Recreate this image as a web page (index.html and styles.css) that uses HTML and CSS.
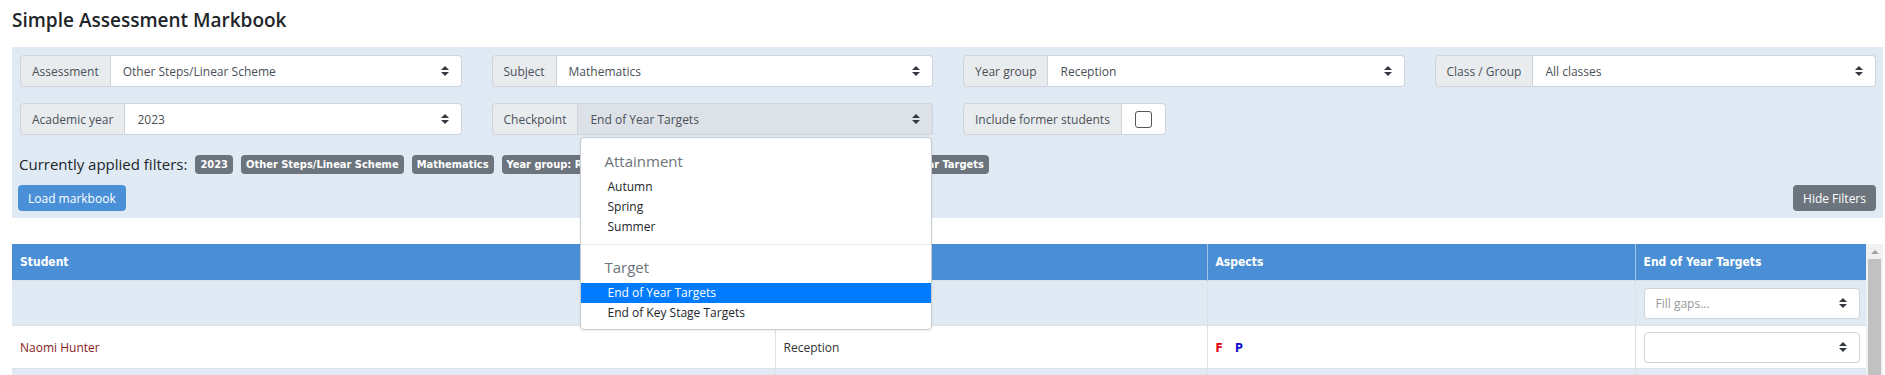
FILE: index.html
```html
<!DOCTYPE html>
<html lang="en">
<head>
    <meta charset="UTF-8">
    <title>Simple Assessment Markbook</title>
    <link rel="stylesheet" href="styles.css">
</head>
<body>
    <svg class="defs" width="0" height="0">
        <symbol id="caret" viewBox="0 0 8 10">
            <path d="M0 4 L4 0 L8 4 Z M0 6 L4 10 L8 6 Z"/>
        </symbol>
    </svg>

    <h1 class="page-title">Simple Assessment Markbook</h1>

    <section class="filters">
        <div class="filter-grid">
            <div class="input-group">
                <span class="group-label">Assessment</span>
                <div class="fake-select"><span>Other Steps/Linear Scheme</span><svg class="caret"><use href="#caret"/></svg></div>
            </div>
            <div class="input-group">
                <span class="group-label">Subject</span>
                <div class="fake-select"><span>Mathematics</span><svg class="caret"><use href="#caret"/></svg></div>
            </div>
            <div class="input-group">
                <span class="group-label">Year group</span>
                <div class="fake-select"><span>Reception</span><svg class="caret"><use href="#caret"/></svg></div>
            </div>
            <div class="input-group">
                <span class="group-label">Class / Group</span>
                <div class="fake-select"><span>All classes</span><svg class="caret"><use href="#caret"/></svg></div>
            </div>

            <div class="input-group">
                <span class="group-label">Academic year</span>
                <div class="fake-select"><span>2023</span><svg class="caret"><use href="#caret"/></svg></div>
            </div>
            <div class="input-group">
                <span class="group-label">Checkpoint</span>
                <div class="fake-select active"><span>End of Year Targets</span><svg class="caret"><use href="#caret"/></svg></div>

                <div class="select-menu">
                    <div class="menu-head">Attainment</div>
                    <div class="menu-item">Autumn</div>
                    <div class="menu-item">Spring</div>
                    <div class="menu-item">Summer</div>
                    <div class="menu-divider"></div>
                    <div class="menu-head">Target</div>
                    <div class="menu-item selected">End of Year Targets</div>
                    <div class="menu-item">End of Key Stage Targets</div>
                </div>
            </div>
            <div class="input-group compact">
                <span class="group-label">Include former students</span>
                <div class="check-cell"><span class="checkbox"></span></div>
            </div>
        </div>

        <div class="applied">
            <span>Currently applied filters:</span>
            <span class="badge">2023</span>
            <span class="badge">Other Steps/Linear Scheme</span>
            <span class="badge">Mathematics</span>
            <span class="badge">Year group: Reception</span>
            <span class="badge">Class / Group: All classes</span>
            <span class="badge">Checkpoint: End of Year Targets</span>
        </div>

        <div class="filter-actions">
            <button class="btn btn-primary">Load markbook</button>
            <button class="btn btn-secondary">Hide Filters</button>
        </div>
    </section>

    <div class="grid-wrap">
        <table class="markbook">
            <colgroup>
                <col class="col-student">
                <col class="col-year">
                <col class="col-aspects">
                <col class="col-target">
            </colgroup>
            <thead>
                <tr>
                    <th>Student</th>
                    <th>Year group</th>
                    <th>Aspects</th>
                    <th>End of Year Targets</th>
                </tr>
            </thead>
            <tbody>
                <tr class="filter-row">
                    <td></td>
                    <td></td>
                    <td></td>
                    <td><div class="cell-select placeholder"><span>Fill gaps...</span><svg class="caret"><use href="#caret"/></svg></div></td>
                </tr>
                <tr class="data-row">
                    <td class="student">Naomi Hunter</td>
                    <td>Reception</td>
                    <td><span class="aspect aspect-f">F</span><span class="aspect aspect-p">P</span></td>
                    <td><div class="cell-select"><span></span><svg class="caret"><use href="#caret"/></svg></div></td>
                </tr>
                <tr class="data-row alt">
                    <td></td>
                    <td></td>
                    <td></td>
                    <td><div class="cell-select"><span></span><svg class="caret"><use href="#caret"/></svg></div></td>
                </tr>
            </tbody>
        </table>
        <div class="scrollbar">
            <span class="scroll-arrow"></span>
            <span class="scroll-thumb"></span>
        </div>
    </div>
</body>
</html>
```

FILE: styles.css
```css
html {
    overflow: hidden;
}
body {
    margin: 0;
    font-family: "Open Sans", "Noto Sans", sans-serif;
    font-size: 12px;
    color: #212529;
}
.defs {
    position: absolute;
}
.page-title {
    margin: 0 0 15px 12px;
    padding-top: 9px;
    font-size: 19px;
    font-weight: 600;
    line-height: 23px;
}

/* filter panel */
.filters {
    background-color: #dfeaf4;
    margin: 0 2px 0 12px;
    padding: 8px 7px 7px 6px;
}
.filter-grid {
    display: grid;
    grid-template-columns: repeat(4, 1fr);
    gap: 16px 30px;
    padding-left: 2px;
}
.input-group {
    display: flex;
    height: 32px;
    position: relative;
}
.input-group.compact {
    justify-self: start;
}
.group-label {
    display: flex;
    align-items: center;
    padding: 0 11px;
    background-color: #e9ecef;
    border: 1px solid #ced4da;
    border-radius: 4px 0 0 4px;
    color: #495057;
    white-space: nowrap;
}
.fake-select {
    flex: 1;
    display: flex;
    align-items: center;
    justify-content: space-between;
    padding: 0 12px;
    background-color: #fff;
    border: 1px solid #ced4da;
    border-left: 0;
    border-radius: 0 4px 4px 0;
    color: #495057;
}
.fake-select.active {
    background-color: #dde2e8;
}
.caret {
    width: 8px;
    height: 10px;
    fill: #343a40;
    flex: none;
}
.check-cell {
    width: 43px;
    display: flex;
    align-items: center;
    justify-content: center;
    background-color: #fff;
    border: 1px solid #ced4da;
    border-left: 0;
    border-radius: 0 4px 4px 0;
}
.checkbox {
    width: 15px;
    height: 15px;
    border: 1px solid #555;
    border-radius: 3px;
}

/* dropdown opened on the checkpoint select */
.select-menu {
    position: absolute;
    top: calc(100% + 2px);
    left: 88px;
    right: 1px;
    background: #fff;
    border: 1px solid #c8ccd0;
    border-radius: 4px;
    padding: 5px 0 6px;
    z-index: 5;
    box-shadow: 0 1px 3px rgba(0,0,0,0.08);
}
.menu-head {
    font-size: 15px;
    line-height: 20px;
    color: #6c757d;
    padding: 8px 24px 6px;
}
.menu-item {
    font-size: 12px;
    line-height: 20px;
    padding: 0 27px;
}
.menu-item.selected {
    background-color: #007bff;
    color: #fff;
}
.menu-divider {
    height: 1px;
    background-color: #e9ecef;
    margin: 7px 0 4px;
}

.applied {
    display: flex;
    align-items: center;
    gap: 8px;
    margin-top: 16px;
    padding-left: 1px;
    font-size: 15px;
    line-height: 26px;
    white-space: nowrap;
}
.badge {
    background-color: #6c757d;
    color: #fff;
    font-family: "DejaVu Sans Condensed", "DejaVu Sans", sans-serif;
    font-weight: bold;
    font-size: 11px;
    line-height: 19px;
    padding: 0 5px;
    border-radius: 4px;
}
.filter-actions {
    display: flex;
    justify-content: space-between;
    margin-top: 8px;
}
.btn {
    height: 26px;
    padding: 0 10px;
    border: 0;
    border-radius: 4px;
    color: #fff;
    font-family: "Open Sans", sans-serif;
    font-size: 12px;
}
.btn-primary {
    background-color: #4a90d9;
}
.btn-secondary {
    background-color: #6c757d;
}

/* markbook table */
.grid-wrap {
    display: flex;
    margin: 26px 2px 0 12px;
}
.markbook {
    width: 1854px;
    flex: none;
    table-layout: fixed;
    border-collapse: collapse;
}
.col-student { width: 763px; }
.col-year { width: 432px; }
.col-aspects { width: 428px; }
.col-target { width: 231px; }
.markbook th {
    height: 36px;
    padding: 0 8px;
    text-align: left;
    background-color: #4a8fd5;
    color: #fff;
    font-family: "DejaVu Sans Condensed", "DejaVu Sans", sans-serif;
    font-size: 12px;
    border-left: 1px solid #9fc3ea;
}
.markbook th:first-child {
    border-left: 0;
}
.markbook td {
    padding: 0 6px 0 8px;
    border-top: 1px solid #dee2e6;
    border-left: 1px solid #dee2e6;
    color: #333;
}
.markbook td:first-child {
    border-left: 0;
}
.filter-row td {
    height: 44px;
    background-color: #dfeaf4;
}
.data-row td {
    height: 42px;
    background-color: #fff;
}
.data-row.alt td {
    background-color: #dfeaf4;
}
.markbook .student {
    color: #861c1c;
}
.aspect {
    font-family: "DejaVu Sans Condensed", "DejaVu Sans", sans-serif;
    font-weight: bold;
    font-size: 12px;
    margin-right: 12px;
}
.aspect-f { color: #e0000f; }
.aspect-p { color: #1010d0; }
.cell-select {
    height: 31px;
    display: flex;
    align-items: center;
    justify-content: space-between;
    padding: 0 12px 0 11px;
    background-color: #fff;
    border: 1px solid #ced4da;
    border-radius: 4px;
    box-sizing: border-box;
}
.cell-select.placeholder {
    color: #999;
}

.scrollbar {
    width: 17px;
    display: flex;
    flex-direction: column;
    align-items: center;
    background-color: #f1f1f1;
}
.scroll-arrow {
    margin: 6px 0 5px;
    border-left: 4px solid transparent;
    border-right: 4px solid transparent;
    border-bottom: 4px solid #a3a3a3;
}
.scroll-thumb {
    flex: 1;
    align-self: stretch;
    margin: 0 2px;
    background-color: #c1c1c1;
}
```
